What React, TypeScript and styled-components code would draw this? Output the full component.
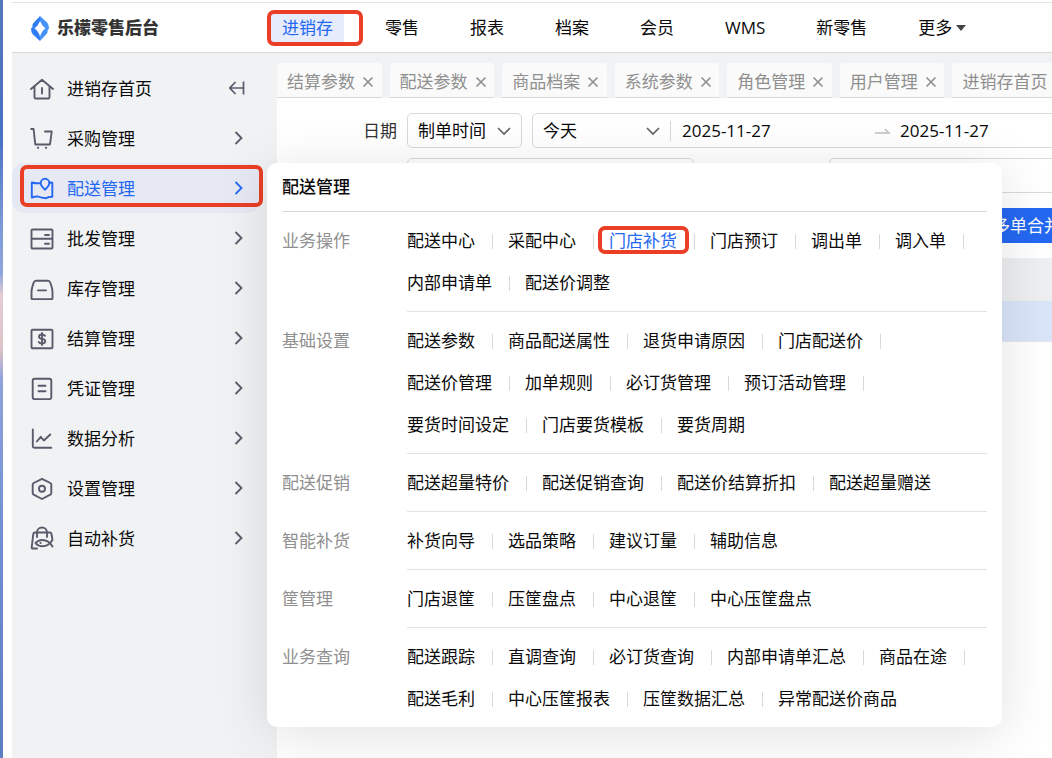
import React from "react";
import styled, { createGlobalStyle, css } from "styled-components";

const color = {
  blue: "#2468f2",
  red: "#ea3f26",
  text: "#0a0a0a",
  muted: "#8f8f8f",
  icon: "#5a5a6b",
  line: "#d9d9d9",
  shell: "#f1f2f4",
};

const GlobalStyle = createGlobalStyle`
  *, *::before, *::after { box-sizing: border-box; }
  body {
    margin: 0;
    background: #fff;
    color: ${color.text};
    font-family: "Open Sans", "Noto Sans CJK SC", sans-serif;
    font-size: 17px;
    line-height: 24px;
  }
  a { color: inherit; text-decoration: none; }
  button, input, select { font: inherit; color: inherit; }
  ul { margin: 0; padding: 0; list-style: none; }
`;

const Page = styled.div`
  display: flex;
  min-height: 100vh;
  overflow: hidden;
`;

const Wallpaper = styled.div`
  flex: none;
  width: 3px;
  background: linear-gradient(
    #5577bb 0%, #4a72c4 18%, #7f9bd6 30%, #8fa6dc 36%, #e3cdd3 39%,
    #dfc3c8 46%, #8fa3da 50%, #7291d2 70%, #5c7dc0 100%
  );
`;

const Shell = styled.div`
  flex: 1;
  min-width: 0;
  display: flex;
  flex-direction: column;
  margin-left: 9px;
`;

const Header = styled.header`
  display: flex;
  align-items: center;
  height: 51px;
  margin-top: 2px;
  padding-top: 1px;
  border-top: 1px solid #e4e4e4;
  border-bottom: 1px solid ${color.line};
  background: #fff;
`;

const Brand = styled.a`
  display: flex;
  align-items: center;
  flex: none;
  gap: 8px;
  width: 255px;
  padding-left: 19px;
  color: #333;
  font-weight: 900;
`;

const TopNav = styled.nav`
  display: flex;
  align-items: center;
  gap: 51px;
  padding-left: 15px;
  white-space: nowrap;
`;

const TopLink = styled.a<{ $active?: boolean }>`
  position: relative;
  display: flex;
  align-items: center;
  gap: 4px;
  ${(p) =>
    p.$active &&
    css`
      color: ${color.blue};
      margin: 0 -10px 0 -11px;
      padding: 2px 11px;
      background: #e6ecfb;
    `}
`;

const Marker = styled.span<{ $inset: string }>`
  position: absolute;
  inset: ${(p) => p.$inset};
  border: 4px solid ${color.red};
  border-radius: 7px;
  pointer-events: none;
`;

const Body = styled.div`
  position: relative;
  flex: 1;
  display: flex;
`;

const Sidebar = styled.nav`
  flex: none;
  width: 265px;
  padding-top: 10px;
  background: ${color.shell};
`;

const SideLink = styled.a<{ $active?: boolean }>`
  position: relative;
  display: flex;
  align-items: center;
  height: 50px;
  margin-right: 17px;
  padding: 0 13px 0 18px;
  border-radius: 12px;
  color: ${(p) => (p.$active ? color.blue : color.text)};
  background: ${(p) => (p.$active ? "#e6e9f4" : "transparent")};
  svg { color: ${(p) => (p.$active ? color.blue : color.icon)}; }
`;

const SideLabel = styled.span`
  flex: 1;
  margin-left: 13px;
  padding-top: 1px;
`;

const Main = styled.main`
  flex: 1;
  min-width: 0;
  overflow: hidden;
  background: #fff;
`;

const TabBar = styled.div`
  padding-top: 10px;
  background: ${color.shell};
`;

const TabList = styled.ul`
  display: grid;
  grid-template-columns: repeat(7, minmax(0, 1fr));
  gap: 8px;
  margin-right: -5px;
`;

const Tab = styled.li`
  display: flex;
  align-items: center;
  gap: 7px;
  height: 35px;
  padding: 3px 0 0 10px;
  border-bottom: 1px solid ${color.line};
  border-radius: 4px 4px 0 0;
  background: #fafafa;
  color: ${color.muted};
  white-space: nowrap;
`;

const CloseButton = styled.button`
  display: flex;
  padding: 0;
  border: 0;
  background: none;
`;

const Filters = styled.form`
  display: flex;
  flex-direction: column;
  gap: 10px;
  padding-top: 15px;
`;

const FilterRow = styled.div`
  display: flex;
  align-items: center;
  height: 35px;
`;

const FilterLabel = styled.label`
  flex: none;
  width: 120px;
  margin-right: 10px;
  color: #333;
  text-align: right;
`;

const SelectWrap = styled.span<{ $width: number; $boxed?: boolean }>`
  position: relative;
  display: flex;
  align-items: center;
  flex: none;
  width: ${(p) => p.$width}px;
  height: ${(p) => (p.$boxed ? "35px" : "100%")};
  border: ${(p) => (p.$boxed ? `1px solid ${color.line}` : "0")};
  border-radius: 5px;
  svg { position: absolute; right: 10px; color: #666; pointer-events: none; }
`;

const Select = styled.select`
  appearance: none;
  width: 100%;
  height: 100%;
  padding: 0 0 0 10px;
  border: 0;
  outline: 0;
  background: transparent;
`;

const RangeBox = styled.div`
  display: flex;
  align-items: center;
  flex: none;
  height: 35px;
  margin-left: 10px;
  border: 1px solid ${color.line};
  border-radius: 5px;
`;

const DateInput = styled.input<{ $width: number }>`
  width: ${(p) => p.$width}px;
  padding: 0;
  border: 0;
  outline: 0;
  background: transparent;
`;

const Rule = styled.span`
  width: 1px;
  height: 20px;
  margin-right: 11px;
  background: ${color.line};
`;

const FieldGrid = styled.div`
  display: grid;
  grid-template-columns: 287px minmax(287px, 1fr);
  gap: 135px;
  padding-left: 130px;
`;

const Field = styled.input`
  min-width: 0;
  height: 35px;
  border: 1px solid ${color.line};
  border-radius: 5px;
  background: #fff;
`;

const Toolbar = styled.div`
  padding: 15px 0 15px 706px;
  white-space: nowrap;
`;

const PrimaryButton = styled.button`
  display: block;
  height: 35px;
  padding: 0 10px;
  border: 0;
  border-radius: 4px;
  background: ${color.blue};
  color: #fff;
`;

const HeadBand = styled.div`
  height: 43px;
  background: #eeeff1;
`;

const RowBand = styled.div`
  height: 41px;
  border-bottom: 1px solid #e4e7ee;
  background: #dae5fa;
`;

const MegaMenu = styled.section`
  position: absolute;
  top: 110px;
  left: 255px;
  width: 735px;
  padding: 0 15px;
  border-radius: 10px;
  background: #fff;
  box-shadow: 0 8px 56px rgba(0, 0, 0, 0.12);
`;

const MenuTitle = styled.h2`
  margin: 0;
  border-bottom: 1px solid ${color.line};
  font-size: 17px;
  font-weight: 500;
  line-height: 48px;
`;

const Group = styled.div`
  display: flex;
  line-height: 42px;
`;

const GroupName = styled.h3`
  flex: none;
  width: 125px;
  margin: 0;
  padding-top: 8px;
  color: ${color.muted};
  font-size: 17px;
  font-weight: 400;
`;

const GroupItems = styled.ul`
  flex: 1;
  display: flex;
  flex-wrap: wrap;
  padding: 8px 0 7px;
  border-bottom: 1px solid #e2e2e2;
  ${Group}:last-child & { border-bottom: 0; }
`;

const GroupItem = styled.li`
  display: flex;
  align-items: center;
  &:not(:last-child)::after {
    content: "";
    width: 1px;
    height: 15px;
    margin: 0 15px 0 17px;
    background: ${color.line};
  }
`;

const MenuLink = styled.a<{ $active?: boolean }>`
  position: relative;
  color: ${(p) => (p.$active ? color.blue : color.text)};
`;

const Icon = ({ children }: { children: React.ReactNode }) => (
  <svg width="24" height="24" viewBox="0 0 24 24" fill="none" stroke="currentColor" strokeWidth="1.9" strokeLinecap="round" strokeLinejoin="round" aria-hidden="true">
    {children}
  </svg>
);

const icons = {
  home: <path d="M1 13 12 3.700 23 13M4.500 10.500v10.700q0 1.300 1.300 1.300h12.400q1.300 0 1.300-1.300V10.500M12 12v5.500" />,
  cart: (
    <>
      <path d="M1.200 3h2.400l1.700 15.500H20L21.700 5.500H15" />
      <path d="M8 21.800h.1M16 21.800h.1" strokeWidth="2.200" />
    </>
  ),
  map: (
    <path d="M9.500 7.200Q5.500 7.600 1.800 6.500v15Q5 20.300 8 20.500q3.500 1.500 8 1.700 3-1.400 6.300-1.400V6.800L20 6.500M15 13.800q-4.300-3.900-4.300-6.700a4.300 4.300 0 0 1 8.600 0q0 2.800-4.300 6.700Z" />
  ),
  drawers: <path d="M2.500 3.500h19q1 0 1 1v17q0 1-1 1h-19q-1 0-1-1v-17q0-1 1-1ZM1.500 12.700h21M15 9h4M15 17.700h4" />,
  stock: <path d="M6 4.700h12q1.600 0 2.300 2 2.200 6 2.200 9.300v6q0 1.300-1.300 1.300H2.800q-1.300 0-1.300-1.300v-6Q1.500 12.700 3.700 6.700q.7-2 2.300-2ZM8 14.400h8" />,
  money: (
    <>
      <rect x="1.500" y="3.700" width="21" height="18.600" rx="1" />
      <path d="M15 9.800q-1-1.300-3-1.300-3 0-3 2.100t3 2.300q3.200.3 3.200 2.400T12 17.500q-2.300 0-3.300-1.500M12 7v12" />
    </>
  ),
  voucher: (
    <>
      <rect x="2.700" y="2.800" width="18.600" height="20.400" rx="2" />
      <path d="M8.500 9.700h7M8.500 15.300h7" />
    </>
  ),
  chart: <path d="M2.800 3.500v16.700q0 1.500 1.500 1.500h17M6.800 15.500l4-4.700 3 3.700 6.500-6" />,
  setting: (
    <>
      <path d="M12 2.800 20.300 7q1 .6 1 1.700v8.200q0 1.100-1 1.700L12 23l-8.300-4.400q-1-.6-1-1.700V8.700q0-1.100 1-1.700Z" />
      <circle cx="12" cy="12.800" r="3" />
    </>
  ),
  bag: (
    <>
      <path d="M7 11V6.500a5 5 0 0 1 10 0V11M7 22.500H2.500q-1 0-.8-1.200L3.300 7.800q.2-1.300 1.500-1.300h15q1.500 0 1.700 1.500l.8 5" />
      <path d="M22.500 14Q18.500 20.300 12.500 20.300 8 20.300 5.500 17.200q2.500-3.200 7-3.200 6 0 10 6.500" />
      <path d="M10.500 16.900h.1" strokeWidth="2" />
    </>
  ),
};

const Logo = () => (
  <svg width="18" height="25" viewBox="0 0 18 25" aria-hidden="true">
    <path d="M9 0 2 7.500Q1 8.800 1.600 11L0 12.500q.2 4 1.500 5.500L9 25v-4.500Q7.300 14.800 3.500 12.500 7.500 9.500 9 5Z" fill="#2f7df6" />
    <path d="M9 0v5q1.500 4.500 5.500 7.500Q10.700 14.800 9 20.500V25l7-7.500q1-1.300.5-3L18 12.500q-.2-4-1.500-5.500Z" fill="#4592fa" />
  </svg>
);

const Chevron = () => (
  <svg width="18" height="18" viewBox="0 0 18 18" fill="none" stroke="currentColor" strokeWidth="1.800" aria-hidden="true">
    <path d="m6.500 3 6 6-6 6" />
  </svg>
);

const Collapse = () => (
  <svg width="18" height="18" viewBox="0 0 18 18" fill="none" stroke="currentColor" strokeWidth="1.700" aria-hidden="true">
    <path d="M6.500 3 .8 9l5.700 6M1 9h13.500M14.500 2.500v13" />
  </svg>
);

const Down = () => (
  <svg width="14" height="14" viewBox="0 0 14 14" fill="none" stroke="currentColor" strokeWidth="1.700" aria-hidden="true">
    <path d="m1 4 6 6 6-6" />
  </svg>
);

const Cross = () => (
  <svg width="12" height="12" viewBox="0 0 12 12" fill="none" stroke="currentColor" strokeWidth="1.600" aria-hidden="true">
    <path d="m1.500 1.500 9 9M10.500 1.500l-9 9" />
  </svg>
);

const topLinks = ["进销存", "零售", "报表", "档案", "会员", "WMS", "新零售"];

const sideLinks: { label: string; icon: keyof typeof icons }[] = [
  { label: "进销存首页", icon: "home" },
  { label: "采购管理", icon: "cart" },
  { label: "配送管理", icon: "map" },
  { label: "批发管理", icon: "drawers" },
  { label: "库存管理", icon: "stock" },
  { label: "结算管理", icon: "money" },
  { label: "凭证管理", icon: "voucher" },
  { label: "数据分析", icon: "chart" },
  { label: "设置管理", icon: "setting" },
  { label: "自动补货", icon: "bag" },
];

const tabs = ["结算参数", "配送参数", "商品档案", "系统参数", "角色管理", "用户管理", "进销存首页"];

const groups = [
  { name: "业务操作", items: ["配送中心", "采配中心", "门店补货", "门店预订", "调出单", "调入单", "内部申请单", "配送价调整"] },
  {
    name: "基础设置",
    items: ["配送参数", "商品配送属性", "退货申请原因", "门店配送价", "配送价管理", "加单规则", "必订货管理", "预订活动管理", "要货时间设定", "门店要货模板", "要货周期"],
  },
  { name: "配送促销", items: ["配送超量特价", "配送促销查询", "配送价结算折扣", "配送超量赠送"] },
  { name: "智能补货", items: ["补货向导", "选品策略", "建议订量", "辅助信息"] },
  { name: "筐管理", items: ["门店退筐", "压筐盘点", "中心退筐", "中心压筐盘点"] },
  {
    name: "业务查询",
    items: ["配送跟踪", "直调查询", "必订货查询", "内部申请单汇总", "商品在途", "配送毛利", "中心压筐报表", "压筐数据汇总", "异常配送价商品"],
  },
];

export default function App() {
  return (
    <Page>
      <GlobalStyle />
      <Wallpaper />
      <Shell>
        <Header>
          <Brand href="#">
            <Logo />
            乐檬零售后台
          </Brand>
          <TopNav>
            {topLinks.map((label, i) => (
              <TopLink key={label} href="#" $active={i === 0}>
                {label}
                {i === 0 && <Marker $inset="-4px -19px -4px -4px" />}
              </TopLink>
            ))}
            <TopLink href="#">
              更多
              <svg width="10" height="6" viewBox="0 0 10 6" aria-hidden="true">
                <path d="M0 0h10L5 6Z" fill="#444" />
              </svg>
            </TopLink>
          </TopNav>
        </Header>
        <Body>
          <Sidebar>
            {sideLinks.map(({ label, icon }, i) => (
              <SideLink key={label} href="#" $active={label === "配送管理"}>
                <Icon>{icons[icon]}</Icon>
                <SideLabel>{label}</SideLabel>
                {i === 0 ? <Collapse /> : <Chevron />}
                {label === "配送管理" && <Marker $inset="2px -3px 6px 8px" />}
              </SideLink>
            ))}
          </Sidebar>
          <Main>
            <TabBar>
              <TabList>
                {tabs.map((label) => (
                  <Tab key={label}>
                    {label}
                    <CloseButton type="button" aria-label="关闭">
                      <Cross />
                    </CloseButton>
                  </Tab>
                ))}
              </TabList>
            </TabBar>
            <Filters>
              <FilterRow>
                <FilterLabel htmlFor="date-kind">日期</FilterLabel>
                <SelectWrap $width={115} $boxed>
                  <Select id="date-kind" defaultValue="制单时间">
                    <option>制单时间</option>
                  </Select>
                  <Down />
                </SelectWrap>
                <RangeBox>
                  <SelectWrap $width={137}>
                    <Select aria-label="日期范围" defaultValue="今天">
                      <option>今天</option>
                    </Select>
                    <Down />
                  </SelectWrap>
                  <Rule />
                  <DateInput $width={192} aria-label="开始日期" defaultValue="2025-11-27" />
                  <svg width="26" height="10" viewBox="0 0 26 10" fill="none" stroke="#bfbfbf" strokeWidth="1.500" aria-hidden="true">
                    <path d="M1 7h14L11 3" />
                  </svg>
                  <DateInput $width={192} aria-label="结束日期" defaultValue="2025-11-27" />
                </RangeBox>
              </FilterRow>
              <FieldGrid>
                <Field aria-label="单据号" />
                <Field aria-label="门店" />
              </FieldGrid>
            </Filters>
            <Toolbar>
              <PrimaryButton type="button">多单合并</PrimaryButton>
            </Toolbar>
            <HeadBand />
            <RowBand />
          </Main>
          <MegaMenu>
            <MenuTitle>配送管理</MenuTitle>
            {groups.map((group) => (
              <Group key={group.name}>
                <GroupName>{group.name}</GroupName>
                <GroupItems>
                  {group.items.map((item) => (
                    <GroupItem key={item}>
                      <MenuLink href="#" $active={item === "门店补货"}>
                        {item}
                        {item === "门店补货" && <Marker $inset="6px -12px 8px -11px" />}
                      </MenuLink>
                    </GroupItem>
                  ))}
                </GroupItems>
              </Group>
            ))}
          </MegaMenu>
        </Body>
      </Shell>
    </Page>
  );
}
